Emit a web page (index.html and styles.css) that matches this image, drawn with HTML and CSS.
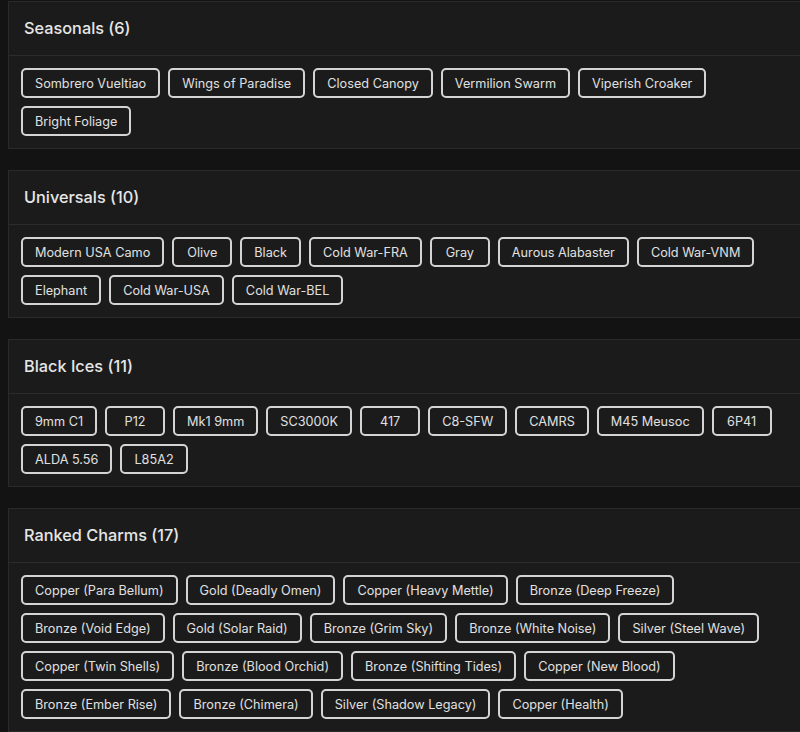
FILE: index.html
```html
<!DOCTYPE html>
<html>
<head>
<meta charset="utf-8">
<link rel="stylesheet" href="styles.css">
</head>
<body>
<div class="page">
  <section class="panel">
    <div class="panel-head"><h2 class="panel-title">Seasonals (6)</h2></div>
    <div class="chips">
      <span class="chip">Sombrero Vueltiao</span>
      <span class="chip">Wings of Paradise</span>
      <span class="chip">Closed Canopy</span>
      <span class="chip">Vermilion Swarm</span>
      <span class="chip">Viperish Croaker</span>
      <span class="chip">Bright Foliage</span>
    </div>
  </section>
  <section class="panel">
    <div class="panel-head"><h2 class="panel-title">Universals (10)</h2></div>
    <div class="chips">
      <span class="chip">Modern USA Camo</span>
      <span class="chip">Olive</span>
      <span class="chip">Black</span>
      <span class="chip">Cold War-FRA</span>
      <span class="chip">Gray</span>
      <span class="chip">Aurous Alabaster</span>
      <span class="chip">Cold War-VNM</span>
      <span class="chip">Elephant</span>
      <span class="chip">Cold War-USA</span>
      <span class="chip">Cold War-BEL</span>
    </div>
  </section>
  <section class="panel">
    <div class="panel-head"><h2 class="panel-title">Black Ices (11)</h2></div>
    <div class="chips">
      <span class="chip">9mm C1</span>
      <span class="chip">P12</span>
      <span class="chip">Mk1 9mm</span>
      <span class="chip">SC3000K</span>
      <span class="chip">417</span>
      <span class="chip">C8-SFW</span>
      <span class="chip">CAMRS</span>
      <span class="chip">M45 Meusoc</span>
      <span class="chip">6P41</span>
      <span class="chip">ALDA 5.56</span>
      <span class="chip">L85A2</span>
    </div>
  </section>
  <section class="panel">
    <div class="panel-head"><h2 class="panel-title">Ranked Charms (17)</h2></div>
    <div class="chips">
      <span class="chip">Copper (Para Bellum)</span>
      <span class="chip">Gold (Deadly Omen)</span>
      <span class="chip">Copper (Heavy Mettle)</span>
      <span class="chip">Bronze (Deep Freeze)</span>
      <span class="chip">Bronze (Void Edge)</span>
      <span class="chip">Gold (Solar Raid)</span>
      <span class="chip">Bronze (Grim Sky)</span>
      <span class="chip">Bronze (White Noise)</span>
      <span class="chip">Silver (Steel Wave)</span>
      <span class="chip">Copper (Twin Shells)</span>
      <span class="chip">Bronze (Blood Orchid)</span>
      <span class="chip">Bronze (Shifting Tides)</span>
      <span class="chip">Copper (New Blood)</span>
      <span class="chip">Bronze (Ember Rise)</span>
      <span class="chip">Bronze (Chimera)</span>
      <span class="chip">Silver (Shadow Legacy)</span>
      <span class="chip">Copper (Health)</span>
    </div>
  </section>
</div>
</body>
</html>
```
FILE: styles.css
```css
html, body {
  margin: 0;
  padding: 0;
  overflow: hidden;
  background: #131313;
}
body {
  font-family: Inter, "Open Sans", sans-serif;
  color: #e2e2e2;
}
.page {
  width: 808px;
  padding: 1px 0 0 8px;
  display: flex;
  flex-direction: column;
  gap: 21px;
}
.panel {
  background: #1b1b1b;
  border: 1px solid #2a2a2a;
}
.panel-head {
  box-sizing: border-box;
  height: 54px;
  display: flex;
  align-items: center;
  padding: 0 15px 2px;
  border-bottom: 1px solid #2c2c2c;
}
.panel-title {
  margin: 0;
  font-size: 16.3px;
  font-weight: 500;
  color: #e6e6e6;
}
.chips {
  display: flex;
  flex-wrap: wrap;
  gap: 8px;
  padding: 12px 12px 12px;
}
.chip {
  box-sizing: border-box;
  min-width: 60px;
  height: 30px;
  padding: 0 12px;
  border: 2px solid #d4d4d4;
  border-radius: 5px;
  display: flex;
  align-items: center;
  justify-content: center;
  font-size: 12.7px;
  color: #e0e0e0;
  white-space: nowrap;
}
```
